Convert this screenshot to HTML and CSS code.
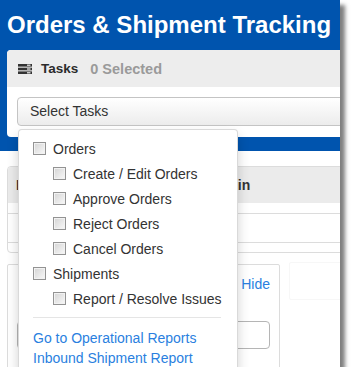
FILE: index.html
```html
<!DOCTYPE html>
<html>
<head>
<meta charset="utf-8">
<link rel="stylesheet" href="styles.css">
</head>
<body>
<div class="shot">
  <div class="page">
    <header class="topbar">
      <h1 class="title">Orders &amp; Shipment Tracking</h1>
      <section class="panel">
        <div class="panel-head">
          <svg class="tasks-icon" width="14" height="10" viewBox="0 0 14 10">
            <rect x="0" y="0" width="14" height="2.6" fill="#333"/>
            <rect x="0" y="3.7" width="14" height="2.6" fill="#333"/>
            <rect x="0" y="7.4" width="14" height="2.6" fill="#333"/>
            <rect x="9" y="0.6" width="3.5" height="1.2" fill="#eee"/>
            <rect x="9" y="4.4" width="3.5" height="1.2" fill="#eee"/>
            <rect x="9" y="8.2" width="3.5" height="1.2" fill="#eee"/>
          </svg>
          <span class="panel-title">Tasks</span>
          <span class="panel-count">0 Selected</span>
        </div>
        <div class="panel-body">
          <div class="select">Select Tasks</div>
        </div>
      </section>
    </header>
    <section class="card">
      <div class="card-head"><span class="col-first">Item</span><span class="col-origin">Origin</span></div>
      <div class="card-gap"></div>
      <div class="card-row"></div>
      <div class="card-tail"></div>
    </section>
    <div class="lower">
      <section class="box">
        <div class="box-top"><a class="link">Hide</a></div>
        <div class="input"></div>
      </section>
      <section class="box faint"></section>
    </div>
  </div>
  <div class="menu">
    <label class="opt"><span class="cb"></span>Orders</label>
    <label class="opt sub"><span class="cb"></span>Create / Edit Orders</label>
    <label class="opt sub"><span class="cb"></span>Approve Orders</label>
    <label class="opt sub"><span class="cb"></span>Reject Orders</label>
    <label class="opt sub"><span class="cb"></span>Cancel Orders</label>
    <label class="opt"><span class="cb"></span>Shipments</label>
    <label class="opt sub"><span class="cb"></span>Report / Resolve Issues</label>
    <div class="sep"></div>
    <a class="link menu-link">Go to Operational Reports</a>
    <a class="link menu-link">Inbound Shipment Report</a>
  </div>
</div>
</body>
</html>
```
FILE: styles.css
```css
html, body {
  margin: 0;
  padding: 0;
  background: #fff;
}
body {
  font-family: "Liberation Sans", Arial, sans-serif;
  color: #333;
}
.shot {
  position: relative;
  width: 340px;
  height: 367px;
  overflow: hidden;
  background: #fff;
  box-shadow: 5px 5px 4px rgba(0, 0, 0, 0.5);
}
.page {
  width: 420px;
}
.topbar {
  background: #0054ae;
  padding: 0 0 14px 7px;
}
.title {
  margin: 0;
  height: 50px;
  line-height: 50px;
  font-size: 24px;
  font-weight: bold;
  color: #fff;
  white-space: nowrap;
}
.panel {
  height: 87px;
  background: #fff;
  border-radius: 4px 0 0 4px;
  overflow: hidden;
}
.panel-head {
  height: 37px;
  background: #ededed;
  display: flex;
  align-items: center;
  padding-left: 11px;
}
.tasks-icon {
  display: block;
  margin-right: 9px;
}
.panel-title {
  font-size: 13.5px;
  font-weight: bold;
  color: #2b2b2b;
  margin-right: 12px;
}
.panel-count {
  font-size: 14.5px;
  font-weight: bold;
  color: #9a9a9a;
}
.panel-body {
  padding: 10px 0 0 10px;
}
.select {
  height: 29px;
  box-sizing: border-box;
  border: 1px solid #c4c4c4;
  border-radius: 4px 0 0 4px;
  background: linear-gradient(#ffffff, #ececec);
  font-size: 14px;
  line-height: 27px;
  padding-left: 12px;
  color: #333;
}
.card {
  margin: 15px 0 0 7px;
  height: 87px;
  box-sizing: border-box;
  border: 1px solid #dcdcdc;
  border-radius: 4px;
  overflow: hidden;
}
.card-head {
  height: 36px;
  background: #ebebeb;
  display: flex;
  align-items: center;
  font-size: 14px;
  font-weight: bold;
  color: #333;
  padding-left: 8px;
}
.col-first {
  width: 193px;
}
.card-gap {
  height: 10px;
  border-bottom: 1px solid #dcdcdc;
}
.card-row {
  height: 28px;
  border-bottom: 1px solid #dcdcdc;
}
.lower {
  display: flex;
  align-items: flex-start;
  margin: 9px 0 0 7px;
}
.box {
  width: 273px;
  height: 120px;
  box-sizing: border-box;
  border: 1px solid #dcdcdc;
  border-radius: 2px;
  margin-top: 2px;
}
.box.faint {
  width: 80px;
  height: 38px;
  margin: 0 0 0 9px;
  border-color: #f7f7f7;
}
.box-top {
  display: flex;
  justify-content: flex-end;
  padding: 9px 9px 0 0;
  line-height: 20px;
  font-size: 14px;
}
.input {
  margin: 27px 9px 0 9px;
  height: 28px;
  box-sizing: border-box;
  border: 1px solid #b5b5b5;
  border-radius: 4px;
  background: #fff;
}
.link {
  color: #2a7fe0;
  text-decoration: none;
  font-size: 14px;
}
.menu {
  position: absolute;
  left: 18px;
  top: 129px;
  width: 220px;
  height: 260px;
  box-sizing: border-box;
  background: #fff;
  border: 1px solid rgba(0, 0, 0, 0.15);
  border-radius: 4px;
  box-shadow: 0 6px 12px rgba(0, 0, 0, 0.18);
  padding: 6px 15px 0 14px;
}
.opt {
  display: flex;
  align-items: center;
  height: 25px;
  font-size: 14px;
  color: #333;
  white-space: nowrap;
}
.opt.sub {
  padding-left: 20px;
}
.cb {
  width: 13px;
  height: 13px;
  box-sizing: border-box;
  border: 1px solid #939393;
  background: linear-gradient(135deg, #d4d4d4, #f9f9f9);
  box-shadow: inset 0 0 0 1px #f2f2f2;
  margin-right: 7px;
  flex: none;
}
.sep {
  height: 1px;
  background: #e5e5e5;
  margin: 6px 1px 10px 0;
}
.menu-link {
  display: block;
  line-height: 20px;
  white-space: nowrap;
}
```
